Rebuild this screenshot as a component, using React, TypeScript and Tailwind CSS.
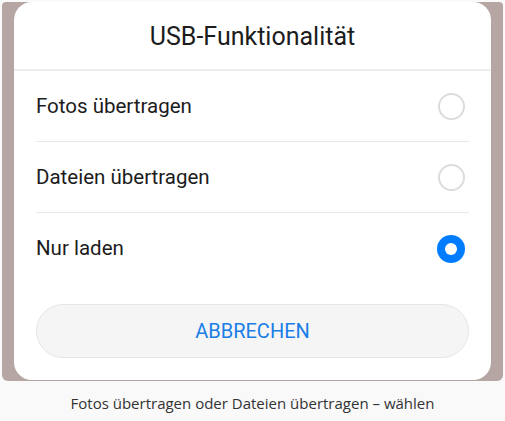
import React from "react";

function Radio({ checked }: { checked?: boolean }) {
  if (checked) {
    return (
      <div className="w-[28px] h-[28px] rounded-full bg-[#007dff] flex items-center justify-center">
        <div className="w-[12px] h-[12px] rounded-full bg-white" />
      </div>
    );
  }
  return <div className="w-[27px] h-[27px] rounded-full border-[2px] border-[#dcdcdc] bg-white" />;
}

function Row({ label, checked, last }: { label: string; checked?: boolean; last?: boolean }) {
  return (
    <div className={"h-[71px] flex items-center justify-between pr-[4px] " + (last ? "" : "border-b border-[#e8e8e8]")}>
      <span className="text-[20.5px] text-[#1c1c1c]">{label}</span>
      <Radio checked={checked} />
    </div>
  );
}

export default function App() {
  return (
    <div className="w-[505px] h-[421px] bg-[#f9f9f9] pt-[2px] px-[2px] flex flex-col" style={{ fontFamily: "Roboto, sans-serif" }}>
      <div className="h-[379px] bg-[#b5a6a4] rounded-b-[6px] rounded-t-[4px] px-[12px]">
        <div className="h-[378px] bg-white rounded-[18px] flex flex-col">
          <div className="h-[69px] pt-[3px] flex items-center justify-center text-[25px] text-[#1c1c1c] border-b-2 border-[#ececec]">
            USB-Funktionalität
          </div>
          <div className="px-[22px] flex flex-col">
            <Row label="Fotos übertragen" />
            <Row label="Dateien übertragen" />
            <Row label="Nur laden" checked last />
            <div className="mt-[20px] h-[54px] rounded-full bg-[#f5f5f5] border border-[#e6e6e6] flex items-center justify-center text-[20px] text-[#1a7ee6]">
              ABBRECHEN
            </div>
          </div>
        </div>
      </div>
      <div className="flex-1 flex items-center justify-center pt-[4px] text-[15px] text-[#333]" style={{ fontFamily: "'Open Sans', sans-serif" }}>
        Fotos übertragen oder Dateien übertragen – wählen
      </div>
    </div>
  );
}
